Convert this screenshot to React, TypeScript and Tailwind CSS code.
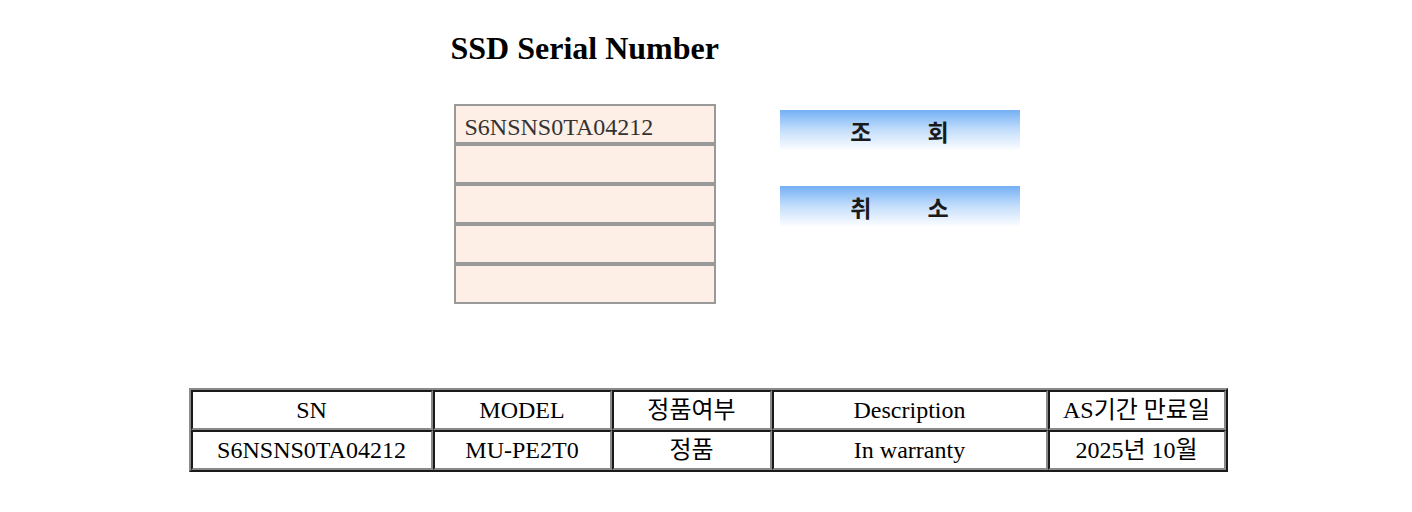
const serif = "font-['Liberation_Serif','Times_New_Roman','Noto_Sans_CJK_KR',serif]"

const rows = [
  ['SN', 'MODEL', '정품여부', 'Description', 'AS기간 만료일'],
  ['S6NSNS0TA04212', 'MU-PE2T0', '정품', 'In warranty', '2025년 10월'],
]

const colWidths = ['w-[242px]', 'w-[179px]', 'w-[160px]', 'w-[276px]', 'w-[178px]']

function SerialInput({ value }: { value?: string }) {
  return (
    <input
      type="text"
      readOnly
      defaultValue={value ?? ''}
      className={`${serif} block h-[40px] w-[262px] border-2 border-[#999999] bg-[#fdeee6] pt-[9px] pb-[3px] pl-[9px] text-[24px] leading-[24px] text-[#333333] outline-none`}
    />
  )
}

function GradientButton({ left, right }: { left: string; right: string }) {
  return (
    <button
      type="button"
      className="flex h-[40px] w-[240px] items-center justify-center gap-[56px] bg-gradient-to-b from-[#74b0f4] via-[#c4defb] to-[#fbfdff] pt-[2px] font-['Noto_Sans_CJK_KR',sans-serif] text-[23px] font-bold leading-none text-[#1a1a1a]"
    >
      <span>{left}</span>
      <span>{right}</span>
    </button>
  )
}

export default function App() {
  return (
    <div className="flex min-h-[512px] w-full flex-col items-center bg-white pl-[4px]">
      {/* 상단: 제목 + 입력 + 버튼 */}
      <div className="w-[1039px] pl-[262px] pt-[30px]">
        <h1 className={`${serif} text-[32px] font-bold leading-[36px] text-black`}>
          SSD Serial Number
        </h1>

        <div className="mt-[38px] flex items-start">
          <div className="ml-[3px] flex flex-col">
            <SerialInput value="S6NSNS0TA04212" />
            <SerialInput />
            <SerialInput />
            <SerialInput />
            <SerialInput />
          </div>
          <div className="ml-[64px] mt-[6px] flex flex-col gap-[36px]">
            <GradientButton left="조" right="회" />
            <GradientButton left="취" right="소" />
          </div>
        </div>
      </div>

      {/* 결과 테이블 */}
      <table
        className={`${serif} mt-[84px] w-[1039px] table-fixed border-separate border-spacing-0 border-2 border-t-[#8a8a8a] border-l-[#8a8a8a] border-r-[#1a1a1a] border-b-[#1a1a1a] text-[24px] text-black`}
      >
        <tbody>
          {rows.map((row, i) => (
            <tr key={i}>
              {row.map((cell, j) => (
                <td
                  key={j}
                  className={`${colWidths[j]} h-[40px] border-2 border-t-[#1a1a1a] border-l-[#1a1a1a] border-r-[#8a8a8a] border-b-[#8a8a8a] p-0 text-center align-middle leading-[28px]`}
                >
                  {cell}
                </td>
              ))}
            </tr>
          ))}
        </tbody>
      </table>
    </div>
  )
}
